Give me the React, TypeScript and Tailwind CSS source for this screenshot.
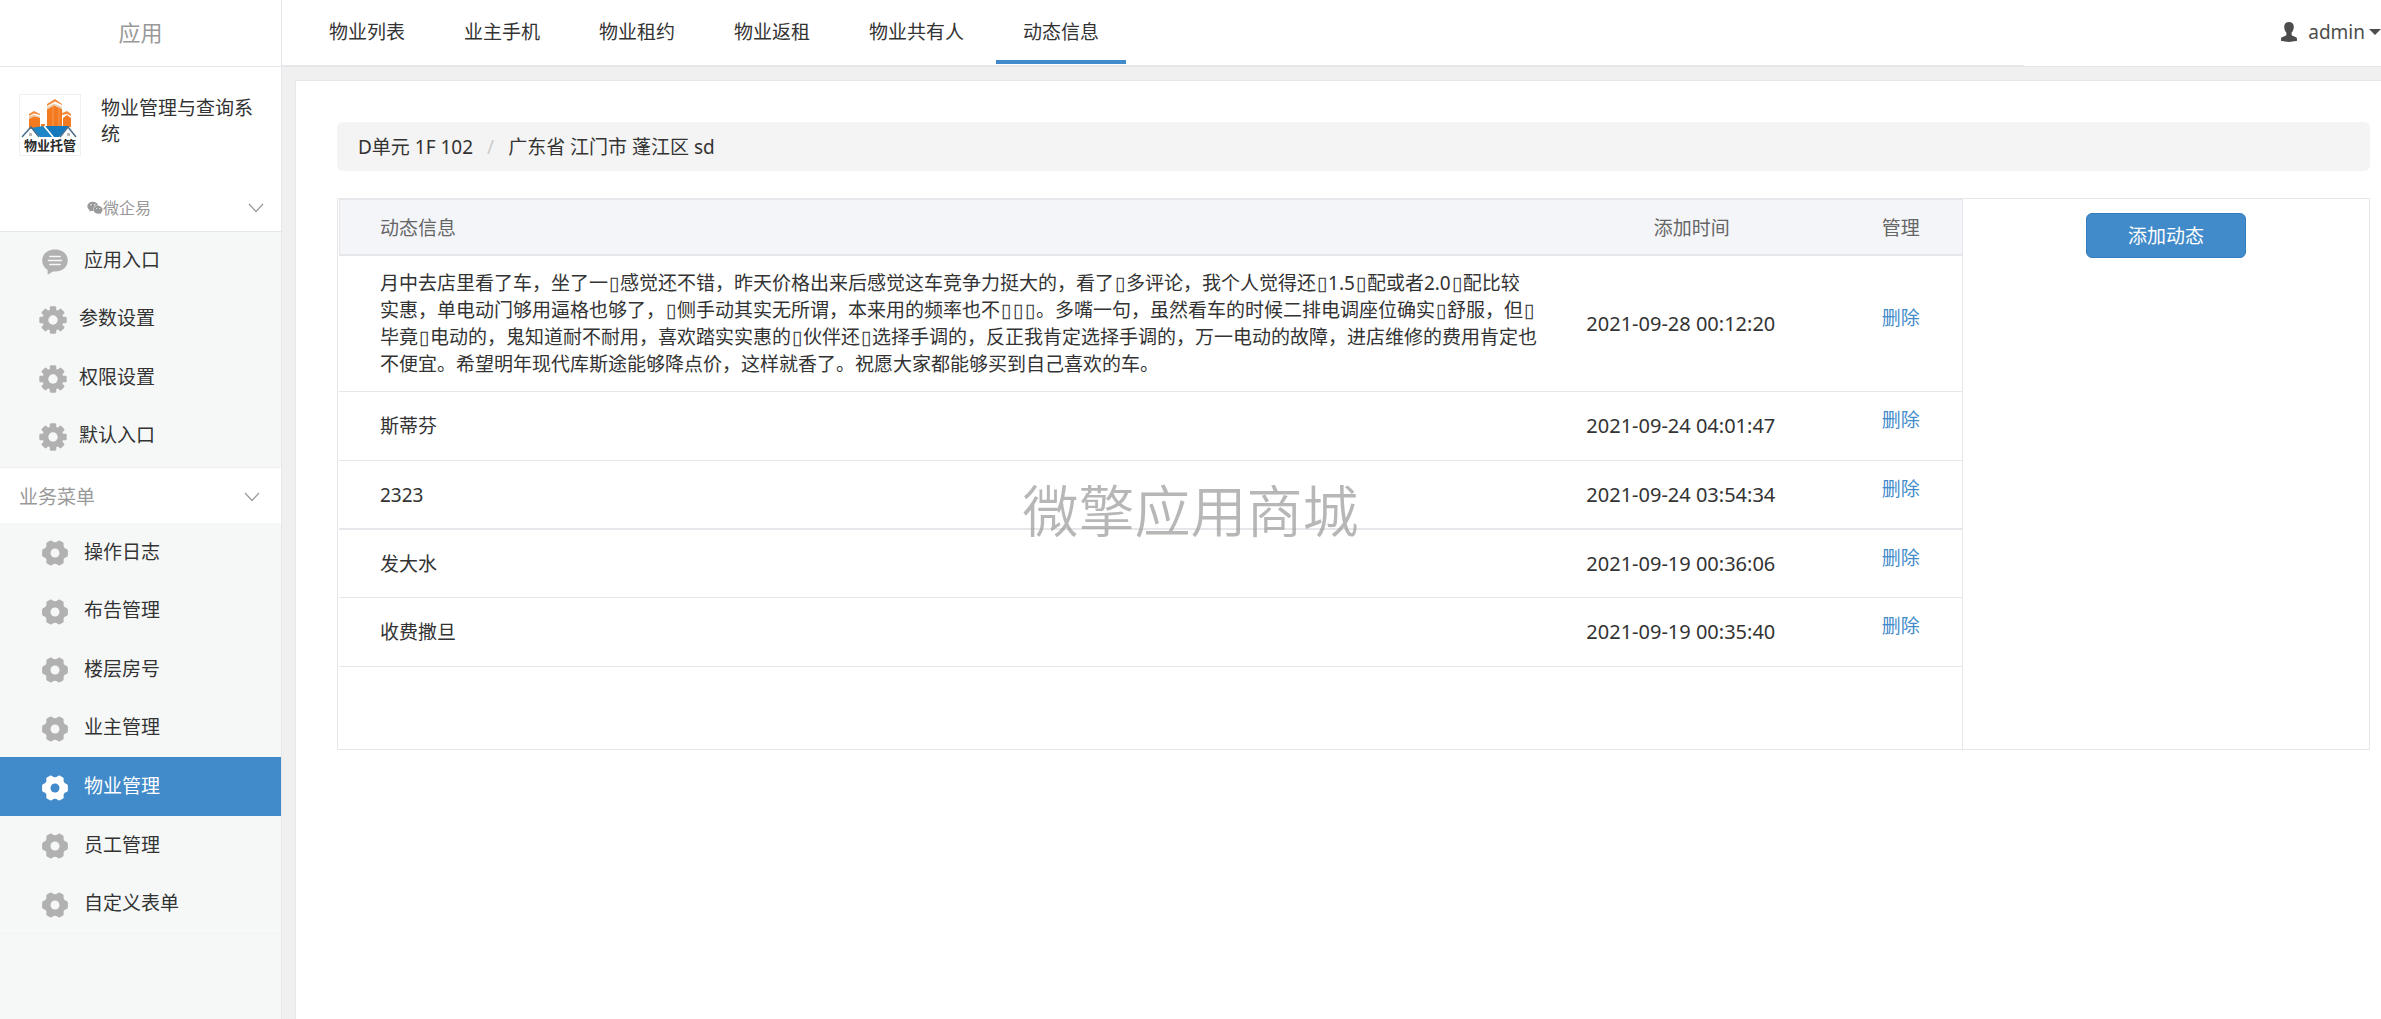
import { FaWeixin } from "react-icons/fa";

/* ---------------- DATA ---------------- */

const tabs = ["物业列表", "业主手机", "物业租约", "物业返租", "物业共有人", "动态信息"];

const appMenu = [
  { label: "应用入口", icon: "comment" },
  { label: "参数设置", icon: "cog" },
  { label: "权限设置", icon: "cog" },
  { label: "默认入口", icon: "cog" },
];

const bizMenu = ["操作日志", "布告管理", "楼层房号", "业主管理", "物业管理", "员工管理", "自定义表单"];

const longNote = `月中去店里看了车，坐了一▯感觉还不错，昨天价格出来后感觉这车竞争力挺大的，看了▯多评论，我个人觉得还▯1.5▯配或者2.0▯配比较
实惠，单电动门够用逼格也够了，▯侧手动其实无所谓，本来用的频率也不▯▯▯。多嘴一句，虽然看车的时候二排电调座位确实▯舒服，但▯
毕竟▯电动的，鬼知道耐不耐用，喜欢踏实实惠的▯伙伴还▯选择手调的，反正我肯定选择手调的，万一电动的故障，进店维修的费用肯定也
不便宜。希望明年现代库斯途能够降点价，这样就香了。祝愿大家都能够买到自己喜欢的车。`;

const rows = [
  { text: longNote, time: "2021-09-28 00:12:20", cell: "h-[136px] border-b" },
  { text: "斯蒂芬", time: "2021-09-24 04:01:47", cell: "h-[69px] border-b" },
  { text: "2323", time: "2021-09-24 03:54:34", cell: "h-[69px] border-b-2" },
  { text: "发大水", time: "2021-09-19 00:36:06", cell: "h-[68px] border-b" },
  { text: "收费撒旦", time: "2021-09-19 00:35:40", cell: "h-[69px] border-b" },
];

/* ---------------- ICONS ---------------- */

const CogIcon = () => (
  <svg viewBox="0 0 28 28" className="size-7" fill="currentColor" aria-hidden="true">
    {[0, 45, 90, 135].map((a) => (
      <rect key={a} x="10.800" y="0.300" width="6.400" height="27.400" rx="1.200" transform={`rotate(${a} 14 14)`} />
    ))}
    <circle cx="14" cy="14" r="10.600" />
    <circle cx="14" cy="14" r="4.700" className="fill-[#f6f8f8]" />
  </svg>
);

const GearIcon = ({ hole }: { hole: string }) => (
  <svg viewBox="0 0 26 26" className="size-[26px]" fill="currentColor" aria-hidden="true">
    <path d="M7.600 .9C8.600.3 9.700.6 10.400 1.300C11.700 2.500 14.300 2.500 15.600 1.300C16.300.6 17.400.3 18.400.9L20.700 2.200C21.700 2.800 21.900 3.800 21.600 4.800C21.300 6.600 22.200 8.200 24 8.700C25.200 9.100 25.900 9.900 25.900 11V15C25.900 16.100 25.200 16.900 24 17.300C22.200 17.800 21.300 19.400 21.600 21.200C21.900 22.200 21.700 23.200 20.700 23.800L18.400 25.100C17.400 25.700 16.300 25.400 15.600 24.700C14.300 23.500 11.700 23.500 10.400 24.700C9.700 25.400 8.600 25.700 7.600 25.100L5.300 23.800C4.300 23.200 4.100 22.200 4.400 21.200C4.700 19.400 3.800 17.800 2 17.300C.8 16.900.1 16.100.1 15V11C.1 9.900.8 9.100 2 8.700C3.800 8.200 4.700 6.600 4.400 4.800C4.100 3.800 4.300 2.800 5.300 2.200Z" />
    <circle cx="13" cy="13" r="4.500" className={hole} />
  </svg>
);

const CommentIcon = () => (
  <svg viewBox="0 0 26 26" className="size-[26px]" aria-hidden="true">
    <path d="M13 .5C5.700.5.200 5 .200 11.500C.200 15.600 2.300 18.900 5.600 20.900V25.800L11 22.400C11.700 22.500 12.300 22.500 13 22.500C20.300 22.500 25.800 18 25.800 11.500C25.800 5 20.300.5 13 .5Z" fill="currentColor" />
    <path d="M8 7.500H18M6.500 11.500H19.500M8 15.500H18" className="stroke-[#f6f8f8]" strokeWidth="1.700" strokeLinecap="round" />
  </svg>
);

const Chevron = () => (
  <svg viewBox="0 0 16 10" className="h-[10px] w-4" fill="none" stroke="#999" strokeWidth="1.200" aria-hidden="true">
    <path d="M1 1L8 8.500L15 1" />
  </svg>
);

const UserIcon = () => (
  <svg viewBox="0 0 16 20" className="h-5 w-4" fill="currentColor" aria-hidden="true">
    <path d="M8 0C10.900 0 12.800 1.800 12.800 4.800C12.800 7.500 11.700 9.600 10.600 10.700V12.800C10.600 13.300 11 13.600 11.500 13.800L14.500 15C15.500 15.400 16 16.200 16 17.200V18.200C16 18.800 15.500 19 15 19.100C10.500 20.200 5.500 20.200 1 19.100C.500 19 0 18.800 0 18.200V17.200C0 16.200.500 15.400 1.500 15L4.500 13.800C5 13.600 5.400 13.300 5.400 12.800V10.700C4.300 9.600 3.200 7.500 3.200 4.800C3.200 1.800 5.100 0 8 0Z" />
  </svg>
);

const Logo = () => (
  <svg viewBox="0 0 60 60" className="size-[60px]" role="img" aria-label="物业托管">
    {/* towers */}
    <path d="M9 22L14 20L20 22V34H9ZM27 14L34 10L42 14V32H27ZM43 23L47 20L51 23V32H43ZM21 29H25V33H21Z" fill="#f47a20" />
    <path d="M9 19L14 16L20 19V20L14 18.500L9 21ZM27 9L35 4L42 9V10L35 6.500L27 11ZM42 18L47 16L51 19V21L47 19L42 20Z" fill="#f58a3a" />
    <path d="M27 12L34 8.500L42 12V14L34 10.500L27 14.500ZM9 22.500L14 20L20 22V23L14 21.500L9 24Z" fill="#e8d2b8" />
    <path d="M33 10V32M39 12V32" stroke="#f9a561" strokeWidth="0.800" />
    {/* roofs */}
    <path d="M11 33L23 31L33 42H20Z" fill="#1c86c8" />
    <path d="M25 31L49 31L39 42H34Z" fill="#1679bb" />
    <path d="M2 42L11 32L19 42M40 42L48 32L56 42" fill="none" stroke="#4a6f8c" strokeWidth="1.500" />
    <path d="M24 31L33 42" stroke="#fff" strokeWidth="1.200" />
    <path d="M9 38H12V41H9ZM47 38H50V41H47Z" fill="#b9b9b9" />
    <text x="30" y="55" textAnchor="middle" fontSize="13" fontWeight="700" fill="#2b2b2b">物业托管</text>
  </svg>
);

/* ---------------- SIDEBAR ---------------- */

const Sidebar = () => (
  <aside className="flex w-[282px] shrink-0 flex-col border-r border-[#e7e7eb] bg-[#f6f8f8]">
    <div className="flex h-[67px] items-center justify-center border-b border-[#e7e7eb] bg-white pb-[2px] text-[22px] text-[#999]">
      应用
    </div>

    <div className="h-[165px] border-b border-[#e7e7e7] bg-white pt-[27px]">
      <div className="flex h-[94px] gap-5 pl-[19px]">
        <div className="size-[62px] shrink-0 border border-[#f0f0f0]">
          <Logo />
        </div>
        <p className="w-[160px] pt-px leading-[26px]">物业管理与查询系统</p>
      </div>
      <div className="flex h-10 items-center justify-between pr-[17px] pl-[87px] text-base text-[#999]">
        <span className="flex items-center">
          <FaWeixin size={16} />
          微企易
        </span>
        <Chevron />
      </div>
    </div>

    <nav className="grid h-[235px] auto-rows-fr pb-[2px]">
      {appMenu.map(({ label, icon }) => (
        <a
          key={label}
          href="#"
          className={`flex items-center ${icon === "comment" ? "gap-4 pl-[42px]" : "gap-3 pl-[39px]"}`}
        >
          <span className="pt-[2px] text-[#b1b1b1]">{icon === "comment" ? <CommentIcon /> : <CogIcon />}</span>
          <span className="pb-[2px]">{label}</span>
        </a>
      ))}
    </nav>

    <div className="flex h-14 items-center justify-between border-t border-[#efefef] bg-white pt-[2px] pr-[21px] pl-[19px] text-[#999]">
      业务菜单
      <Chevron />
    </div>

    <nav className="grid h-[411px] auto-rows-fr border-b border-[#f2f4f4]">
      {bizMenu.map((label) => {
        const active = label === "物业管理";
        return (
          <a
            key={label}
            href="#"
            className={`flex items-center gap-4 pl-[42px] ${active ? "bg-[#428bca] text-white" : ""}`}
          >
            <span className={`pt-[2px] ${active ? "text-white" : "text-[#b1b1b1]"}`}>
              <GearIcon hole={active ? "fill-[#428bca]" : "fill-[#f6f8f8]"} />
            </span>
            <span className="pb-px">{label}</span>
          </a>
        );
      })}
    </nav>
  </aside>
);

/* ---------------- TOP BAR ---------------- */

const TopBar = () => (
  <header className="flex h-[67px] items-stretch border-b border-[#e7e7eb] bg-white">
    <nav className="flex w-[83%] gap-[5px] border-b border-[#e7e7eb] pb-px pl-5">
      {tabs.map((tab) => (
        <a
          key={tab}
          href="#"
          className={`flex items-center border-b-4 px-[27px] pt-1 ${
            tab === "动态信息" ? "border-[#428bca]" : "border-transparent"
          }`}
        >
          {tab}
        </a>
      ))}
    </nav>
    <button type="button" className="ml-auto flex items-center pb-[2px] text-[#4d4d4d]">
      <UserIcon />
      <span className="pr-1 pl-[11px]">admin</span>
      <svg viewBox="0 0 12 6" className="h-[6px] w-3" fill="currentColor" aria-hidden="true">
        <path d="M0 0H12L6 6Z" />
      </svg>
    </button>
  </header>
);

/* ---------------- TABLE ---------------- */

// one block per line, with a little room around the empty boxes
const Note = ({ text }: { text: string }) =>
  text.split("\n").map((line) => (
    <p key={line}>
      {line.split(/(▯)/).map((part, i) =>
        part === "▯" ? (
          <span key={i} className="px-px">
            {part}
          </span>
        ) : (
          part
        )
      )}
    </p>
  ));

const NewsTable = () => (
  <table className="w-full border-separate border-spacing-0">
    <thead>
      <tr className="bg-[#f4f5f9] text-[#666]">
        <th className="h-[57px] border-t border-b-2 border-l border-[#e7e7eb] pt-[2px] pl-10 text-left font-normal">动态信息</th>
        <th className="w-[296px] border-t border-b-2 border-[#e7e7eb] pt-[2px] font-normal">添加时间</th>
        <th className="w-[122px] border-t border-b-2 border-[#e7e7eb] pt-[2px] font-normal">管理</th>
      </tr>
    </thead>
    <tbody>
      {rows.map(({ text, time, cell }) => (
        <tr key={time}>
          <td className={`border-[#e7e7eb] pt-px pl-[41px] leading-[27px] whitespace-nowrap ${cell}`}>
            <Note text={text} />
          </td>
          <td className={`border-[#e7e7eb] pr-[22px] text-center text-xl ${cell}`}>{time}</td>
          <td className={`border-[#e7e7eb] pb-3 text-center ${cell}`}>
            <a href="#" className="text-[#428bca]">
              删除
            </a>
          </td>
        </tr>
      ))}
    </tbody>
  </table>
);

const App = () => (
  <div className="relative flex min-h-screen bg-[#f0f0f1] font-['Noto_Sans','Noto_Sans_CJK_SC',sans-serif] text-[19px] leading-[26px] text-[#333]">
    <Sidebar />

    <div className="flex min-w-0 flex-1 flex-col">
      <TopBar />

      <main className="mt-[13px] ml-[13px] flex-1 border-t border-l border-[#e7e7eb] bg-white pt-[41px] pr-[11px] pl-[41px]">
        <div className="flex h-[49px] items-center rounded-md bg-[#f4f4f4] pl-[21px]">
          <a href="#">D单元 1F 102</a>
          <span className="px-[14px] text-[#ccc]">/</span>
          <span>广东省 江门市 蓬江区 sd</span>
        </div>

        <section className="mt-[27px] flex border border-[#e7e7eb]">
          <div className="w-4/5 border-r border-[#e7e7eb] pb-[82px] pl-px">
            <NewsTable />
          </div>
          <div className="w-1/5 pt-[14px] text-center">
            <button type="button" className="h-[45px] w-40 rounded-md border border-[#357ebd] bg-[#428bca] text-white">
              添加动态
            </button>
          </div>
        </section>
      </main>
    </div>

    {/* watermark over the page */}
    <div className="pointer-events-none absolute inset-0 flex items-center justify-center text-[56px] font-[350] text-[#999]/70">
      微擎应用商城
    </div>
  </div>
);

export default App;
